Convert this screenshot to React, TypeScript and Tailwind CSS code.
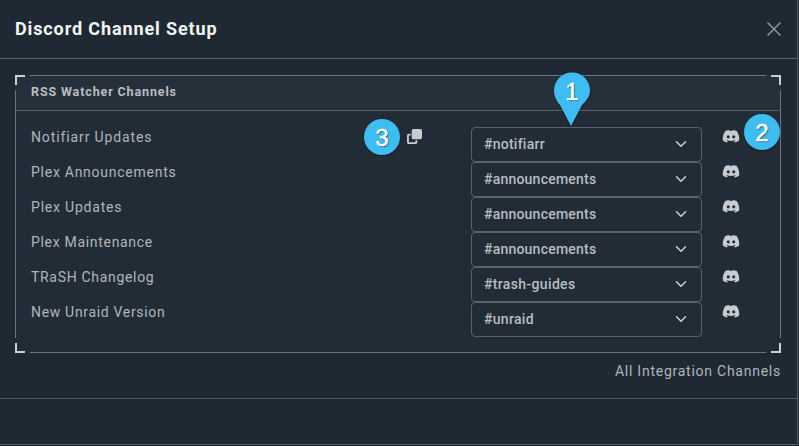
import type { ReactNode } from "react";
import { FaClone, FaDiscord } from "react-icons/fa6";

type Channel = { label: string; labelClass: string; value: string; valueClass: string; copy?: boolean };

const channels: Channel[] = [
  { label: "Notifiarr Updates", labelClass: "tracking-[0.88px]", value: "#notifiarr", valueClass: "tracking-[0.25px]", copy: true },
  { label: "Plex Announcements", labelClass: "tracking-[0.74px]", value: "#announcements", valueClass: "tracking-[0.22px]" },
  { label: "Plex Updates", labelClass: "tracking-[0.8px]", value: "#announcements", valueClass: "tracking-[0.22px]" },
  { label: "Plex Maintenance", labelClass: "tracking-[0.69px]", value: "#announcements", valueClass: "tracking-[0.22px]" },
  { label: "TRaSH Changelog", labelClass: "tracking-[0.69px]", value: "#trash-guides", valueClass: "tracking-[0.35px]" },
  { label: "New Unraid Version", labelClass: "tracking-[0.68px]", value: "#unraid", valueClass: "tracking-[0.3px]" },
];

function Marker({ children, className }: { children: ReactNode; className: string }) {
  return (
    <div
      className={`absolute flex size-9 items-center justify-center rounded-full pt-px font-['Liberation_Sans',sans-serif] text-[24px] leading-none text-white [-webkit-text-stroke:0.5px_white] [text-shadow:1px_1px_1px_rgba(0,0,0,0.55)] ${className}`}
    >
      {children}
    </div>
  );
}

function Frame() {
  return (
    <>
      <i className="absolute top-0 left-[15px] right-[15px] h-px bg-[#6c747c]" />
      <i className="absolute bottom-0 left-[15px] right-[15px] h-px bg-[#6c747c]" />
      <i className="absolute left-0 top-[15px] bottom-[15px] w-px bg-[#6c747c]" />
      <i className="absolute right-0 top-[15px] bottom-[15px] w-px bg-[#6c747c]" />
      <i className="absolute top-0 left-0 size-2.5 border-t-2 border-l-2 border-[#cdd0d3]" />
      <i className="absolute top-0 right-0 size-2.5 border-t-2 border-r-2 border-[#cdd0d3]" />
      <i className="absolute bottom-0 left-0 size-2.5 border-b-2 border-l-2 border-[#cdd0d3]" />
      <i className="absolute bottom-0 right-0 size-2.5 border-b-2 border-r-2 border-[#cdd0d3]" />
    </>
  );
}

function ChannelRow({ label, labelClass, value, valueClass, copy }: Channel) {
  return (
    <div className="flex h-[35px] items-start">
      <div className="flex h-5 w-[376px] items-center">
        <span className={`whitespace-nowrap text-[14px] text-[#b0b5ba] ${labelClass}`}>{label}</span>
      </div>
      <div className="flex h-[19px] w-16 items-center">
        {copy && <FaClone className="size-[15px] text-[#c8cbcf]" />}
      </div>
      <button className="flex h-[35px] w-[231px] items-center justify-between rounded-[4px] border border-[#596169] pr-[14px] pl-3">
        <span className={`whitespace-nowrap text-[14px] font-medium text-[#b8bdc2] ${valueClass}`}>{value}</span>
        <svg viewBox="0 0 16 16" className="mb-px size-3" fill="none" stroke="#ced2d6" strokeWidth="2" strokeLinecap="round" strokeLinejoin="round">
          <path d="m2 5 6 6 6-6" />
        </svg>
      </button>
      <div className="ml-5 flex h-[19px] items-center">
        <FaDiscord className="h-[14.4px] w-[18px] text-[#c8cbcf]" />
      </div>
    </div>
  );
}

export default function App() {
  return (
    <div className="relative h-[446px] w-[799px] overflow-hidden bg-[#1f2933] font-[Roboto,sans-serif]">
      <div className="flex h-[445px] w-[798px] flex-col border-r border-b border-[#535b64]">
        <header className="flex h-[59px] items-center justify-between border-b border-[#59616a] pr-[16px] pl-[14px]">
          <h1 className="whitespace-nowrap pb-px pl-px text-[18px] font-bold tracking-[0.88px] text-[#f4f5f6]">Discord Channel Setup</h1>
          <svg viewBox="0 0 14 14" className="size-[14px]" stroke="#8e949a" strokeWidth="1.5" fill="none">
            <path d="M0.5 0.5 13.5 13.5M13.5 0.5 0.5 13.5" />
          </svg>
        </header>
        <main className="flex h-[340px] flex-col border-b border-[#505860] pt-4 pr-4 pl-[15px]">
          <section className="relative h-[278px] bg-[#222c37]">
            <Frame />
            <div className="flex h-9 items-center border-b border-[#59616a] bg-[#26303b] pl-[15px]">
              <h2 className="whitespace-nowrap pb-px pl-px text-[12.5px] font-bold tracking-[0.87px] text-[#b9bdc1]">RSS Watcher Channels</h2>
            </div>
            <div className="flex flex-col pt-4 pl-4">
              {channels.map((channel) => (
                <ChannelRow key={channel.label} {...channel} />
              ))}
            </div>
          </section>
          <a className="mt-2 self-end whitespace-nowrap text-[14px] leading-5 tracking-[0.75px] text-[#b0b5ba]">All Integration Channels</a>
        </main>
      </div>
      <svg viewBox="0 0 38 56" className="absolute top-[72px] left-[553px] h-14 w-[38px] drop-shadow-[0_1px_1px_rgba(0,0,0,0.4)]">
        <path d="M19 .5A18 18 0 0 0 1 18.500c0 6 2.500 10.500 6 14.500L18 54l11-21c4-4 8-8.500 8-14.500A18 18 0 0 0 19 .5Z" fill="#3dbdf2" />
      </svg>
      <Marker className="top-[73px] left-[554px]">1</Marker>
      <Marker className="top-[114px] left-[744px] bg-[#3dbdf2] shadow-[0_1px_1px_rgba(0,0,0,0.45)]">2</Marker>
      <Marker className="top-[119px] left-[364px] bg-[#3dbdf2] shadow-[0_1px_1px_rgba(0,0,0,0.45)]">3</Marker>
    </div>
  );
}
